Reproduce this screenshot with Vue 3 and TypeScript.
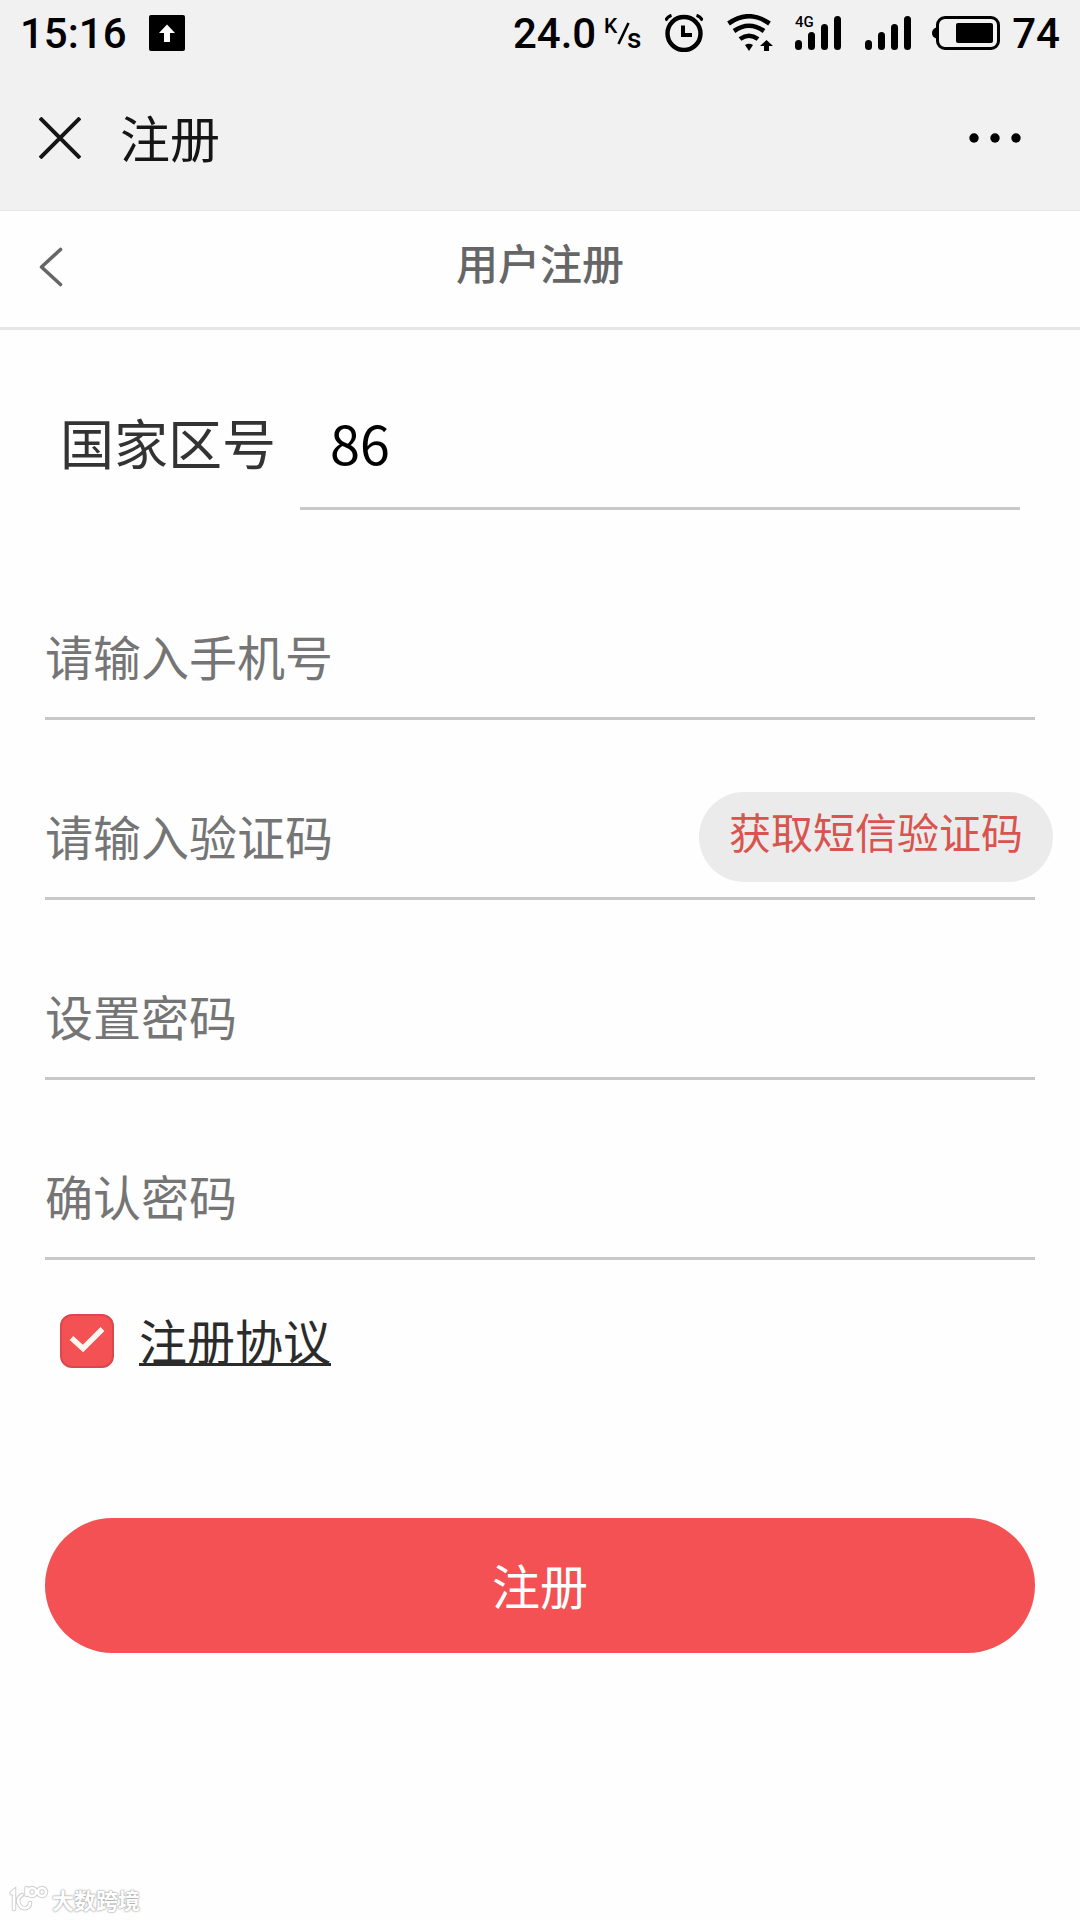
<script setup lang="ts">
import { reactive, ref } from 'vue'

type FieldKey = 'phone' | 'code' | 'password' | 'confirm'

interface Field {
  key: FieldKey
  type: string
  placeholder: string
}

const fields: Field[] = [
  { key: 'phone', type: 'tel', placeholder: '请输入手机号' },
  { key: 'code', type: 'text', placeholder: '请输入验证码' },
  { key: 'password', type: 'password', placeholder: '设置密码' },
  { key: 'confirm', type: 'password', placeholder: '确认密码' },
]

const country = ref('86')
const agreed = ref(true)
const form = reactive<Record<FieldKey, string>>({ phone: '', code: '', password: '', confirm: '' })
</script>

<template>
  <div class="page">
    <header class="chrome">
      <div class="status">
        <div class="status-group">
          <span class="clock">15:16</span>
          <svg class="upload" width="36" height="36" viewBox="0 0 36 36" aria-hidden="true">
            <rect width="36" height="36" rx="2" fill="#000" />
            <path d="M18 9.500L26 18H21V27H15V18H10Z" fill="#fff" />
          </svg>
        </div>
        <div class="status-group">
          <span>24.0</span>
          <svg class="rate" width="40" height="48" viewBox="0 0 40 48" role="img" aria-label="K/s">
            <text x="0" y="24" font-size="21">K</text>
            <path d="M14.500 35L24.500 14" stroke="#000" stroke-width="2.600" />
            <text x="23" y="39" font-size="28">s</text>
          </svg>
          <svg class="alarm" width="38" height="38" viewBox="0 0 38 38" fill="none" stroke="#000" aria-hidden="true">
            <circle cx="19" cy="19.500" r="16.500" stroke-width="4.400" />
            <path d="M18 11.500V21H27" stroke-width="4" />
            <path d="M0.500 6.500Q2.500 2.500 6.500 1.200M37.500 6.500Q35.500 2.500 31.500 1.200" stroke-width="3" />
          </svg>
          <svg class="wifi" width="46" height="38" viewBox="0 0 46 38" fill="none" stroke="#000" stroke-width="4.600" aria-hidden="true">
            <path d="M1.500 9.500Q22 -5 42.500 9.500" />
            <path d="M7 17Q22 6.500 37 17" />
            <path d="M13 25Q22 18.500 31 25" />
            <path d="M18 31Q22 28.500 26 31L22 37Z" fill="#000" stroke="none" />
            <path d="M39.500 26L46 32H42V37H37V32H33Z" fill="#000" stroke="none" />
          </svg>
          <svg class="signal" width="46" height="46" viewBox="0 -6 46 46" aria-hidden="true">
            <text x="0" y="11" font-size="15">4G</text>
            <rect x="0" y="24" width="7" height="10" rx="3.500" />
            <rect x="13" y="16" width="7" height="18" rx="3.500" />
            <rect x="26" y="8" width="7" height="26" rx="3.500" />
            <rect x="39" y="0" width="7" height="34" rx="3.500" />
          </svg>
          <svg class="signal" width="46" height="34" viewBox="0 0 46 34" aria-hidden="true">
            <rect x="0" y="24" width="7" height="10" rx="3.500" />
            <rect x="13" y="16" width="7" height="18" rx="3.500" />
            <rect x="26" y="8" width="7" height="26" rx="3.500" />
            <rect x="39" y="0" width="7" height="34" rx="3.500" />
          </svg>
          <svg class="battery" width="68" height="34" viewBox="0 0 68 34" aria-hidden="true">
            <rect x="5.500" y="1.500" width="61" height="31" rx="7.500" fill="none" stroke="#000" stroke-width="3" />
            <path d="M4 11.500Q0 13 0 17T4 22.500Z" />
            <rect x="24" y="7" width="37" height="20" rx="2" />
          </svg>
          <span>74</span>
        </div>
      </div>
      <div class="titlebar">
        <button class="icon-button" type="button" aria-label="关闭">
          <svg width="42" height="42" viewBox="0 0 42 42" aria-hidden="true">
            <path d="M1 1L41 41M41 1L1 41" stroke="#151515" stroke-width="4" />
          </svg>
        </button>
        <span class="app-title">注册</span>
        <button class="icon-button more" type="button" aria-label="更多">
          <svg width="52" height="10" viewBox="0 0 52 10" aria-hidden="true">
            <circle cx="5" cy="5" r="4.700" />
            <circle cx="26" cy="5" r="4.700" />
            <circle cx="47" cy="5" r="4.700" />
          </svg>
        </button>
      </div>
    </header>

    <nav class="nav">
      <button class="icon-button" type="button" aria-label="返回">
        <svg width="24" height="40" viewBox="0 0 24 40" aria-hidden="true">
          <path d="M21.500 2.500L2.500 20L21.500 37.500" fill="none" stroke="#666" stroke-width="3.600" stroke-linecap="round" stroke-linejoin="round" />
        </svg>
      </button>
      <h1 class="nav-title">用户注册</h1>
    </nav>

    <form class="form" @submit.prevent>
      <div class="country">
        <label for="country">国家区号</label>
        <input id="country" v-model="country" type="text" />
      </div>

      <div class="fields">
        <div v-for="field in fields" :key="field.key" class="field">
          <input
            v-model="form[field.key]"
            :type="field.type"
            :placeholder="field.placeholder"
            :aria-label="field.placeholder"
          />
          <button v-if="field.key === 'code'" class="sms" type="button">获取短信验证码</button>
        </div>
      </div>

      <div class="agreement">
        <span class="tick">
          <input v-model="agreed" type="checkbox" aria-labelledby="terms" />
          <svg v-if="agreed" viewBox="0 0 54 54" aria-hidden="true">
            <path d="M11.500 24L23 34.500L42.500 15" fill="none" stroke="#fff8f0" stroke-width="5.400" />
          </svg>
        </span>
        <a id="terms" href="#">注册协议</a>
      </div>

      <button class="submit" type="submit">注册</button>
    </form>

    <footer class="mark">
      <svg width="40" height="28" viewBox="0 0 40 28" fill="none" stroke-linecap="round" aria-hidden="true">
        <g v-for="pass in 2" :key="pass" :stroke="pass === 1 ? '#cfcfcf' : '#fff'" :stroke-width="pass === 1 ? 4.500 : 2.600">
          <path d="M2.500 8L5 6V24M13 10Q8 13 9.500 18Q12 24 17 23Q21 22 21 18" />
          <circle cx="23" cy="7" r="4" />
          <circle cx="33" cy="7" r="4" />
          <path d="M17.500 3V10" />
        </g>
      </svg>
      <span>大数跨境</span>
    </footer>
  </div>
</template>

<style>
body {
  margin: 0;
  background: #fefefe;
}
</style>

<style scoped>
.page {
  display: flex;
  flex-direction: column;
  min-height: 100vh;
  color: #333;
  font-family: "Noto Sans CJK SC", sans-serif;
}

input,
button {
  box-sizing: border-box;
  margin: 0;
  padding: 0;
  border: 0;
  border-radius: 0;
  outline: 0;
  background: none;
  font-family: inherit;
}

svg {
  display: block;
  flex: none;
}

.chrome {
  border-bottom: 1px solid #e6e6e6;
  background: #f1f1f1;
}

.status {
  display: flex;
  justify-content: space-between;
  height: 66px;
  padding: 0 20px;
  color: #000;
  font: 500 42px/70px Roboto, sans-serif;
}

.status-group {
  display: flex;
  align-items: center;
}

.status-group > span {
  padding-top: 2px;
}

.upload {
  margin-left: 22px;
}

.rate {
  margin-left: 8px;
}

.alarm {
  margin-left: 21px;
}

.wifi {
  margin-left: 24px;
}

.signal {
  margin-left: 22px;
}

.signal + .signal {
  margin-left: 24px;
}

.battery {
  margin: 0 12px 0 21px;
}

.titlebar {
  display: flex;
  align-items: center;
  height: 144px;
  padding: 0 59px 0 39px;
  color: #151515;
}

.app-title {
  margin-left: 39px;
  padding-bottom: 4px;
  font-size: 50px;
  line-height: 72px;
}

.more {
  margin-left: auto;
}

.nav {
  display: grid;
  grid-template-columns: 60px 1fr 60px;
  align-items: center;
  height: 112px;
  padding: 0 39px 4px;
  border-bottom: 3px solid #e6e6e6;
}

.nav-title {
  margin: 0;
  padding-bottom: 10px;
  color: #666;
  font-size: 42px;
  font-weight: 500;
  line-height: 60px;
  text-align: center;
}

.form {
  display: flex;
  flex-direction: column;
  padding: 60px 45px;
}

.country {
  display: flex;
  align-items: center;
  gap: 24px;
  padding: 0 15px;
  font-size: 54px;
}

.country label {
  padding-bottom: 18px;
}

.country input {
  flex: 1;
  min-width: 0;
  height: 120px;
  padding: 0 0 14px 30px;
  border-bottom: 3px solid #c8c8c8;
  color: #000;
  font-size: 54px;
}

.fields {
  display: grid;
  gap: 60px;
  margin-top: 90px;
}

.field {
  position: relative;
}

.field input {
  width: 100%;
  height: 120px;
  padding-bottom: 8px;
  border-bottom: 3px solid #c8c8c8;
  color: #333;
  font-size: 48px;
}

.field input::placeholder {
  color: #757575;
  opacity: 1;
}

/* The pill hangs over the right end of the code field. */
.sms {
  position: absolute;
  top: 12px;
  right: -18px;
  height: 90px;
  padding: 0 30px 14px;
  border-radius: 45px;
  background: #ebebeb;
  color: #d9534f;
  font-size: 42px;
}

.agreement {
  display: flex;
  align-items: center;
  gap: 25px;
  height: 54px;
  margin-top: 54px;
  padding-left: 15px;
}

.tick {
  display: grid;
  width: 54px;
  height: 54px;
}

.tick > * {
  grid-area: 1 / 1;
}

.tick input {
  width: 54px;
  height: 54px;
  border: 2px solid #d9484c;
  border-radius: 12px;
  appearance: none;
}

.tick input:checked {
  background: #f35153;
}

.tick svg {
  pointer-events: none;
}

.agreement a {
  padding-bottom: 4px;
  color: #2b2b2b;
  font-size: 48px;
  line-height: 54px;
  text-decoration: underline 3px;
  text-decoration-skip-ink: none;
  text-underline-offset: 3px;
}

.submit {
  height: 135px;
  margin-top: 150px;
  padding-bottom: 4px;
  border-radius: 68px;
  background: #f35153;
  color: #fff;
  font-size: 48px;
}

.mark {
  display: flex;
  align-items: center;
  gap: 3px;
  margin-top: auto;
  padding: 0 9px 6px;
  color: #fff;
  font-size: 22px;
  font-weight: 700;
  line-height: 30px;
  text-shadow: 0 0 2px #999, 0 0 2px #aaa;
}
</style>
